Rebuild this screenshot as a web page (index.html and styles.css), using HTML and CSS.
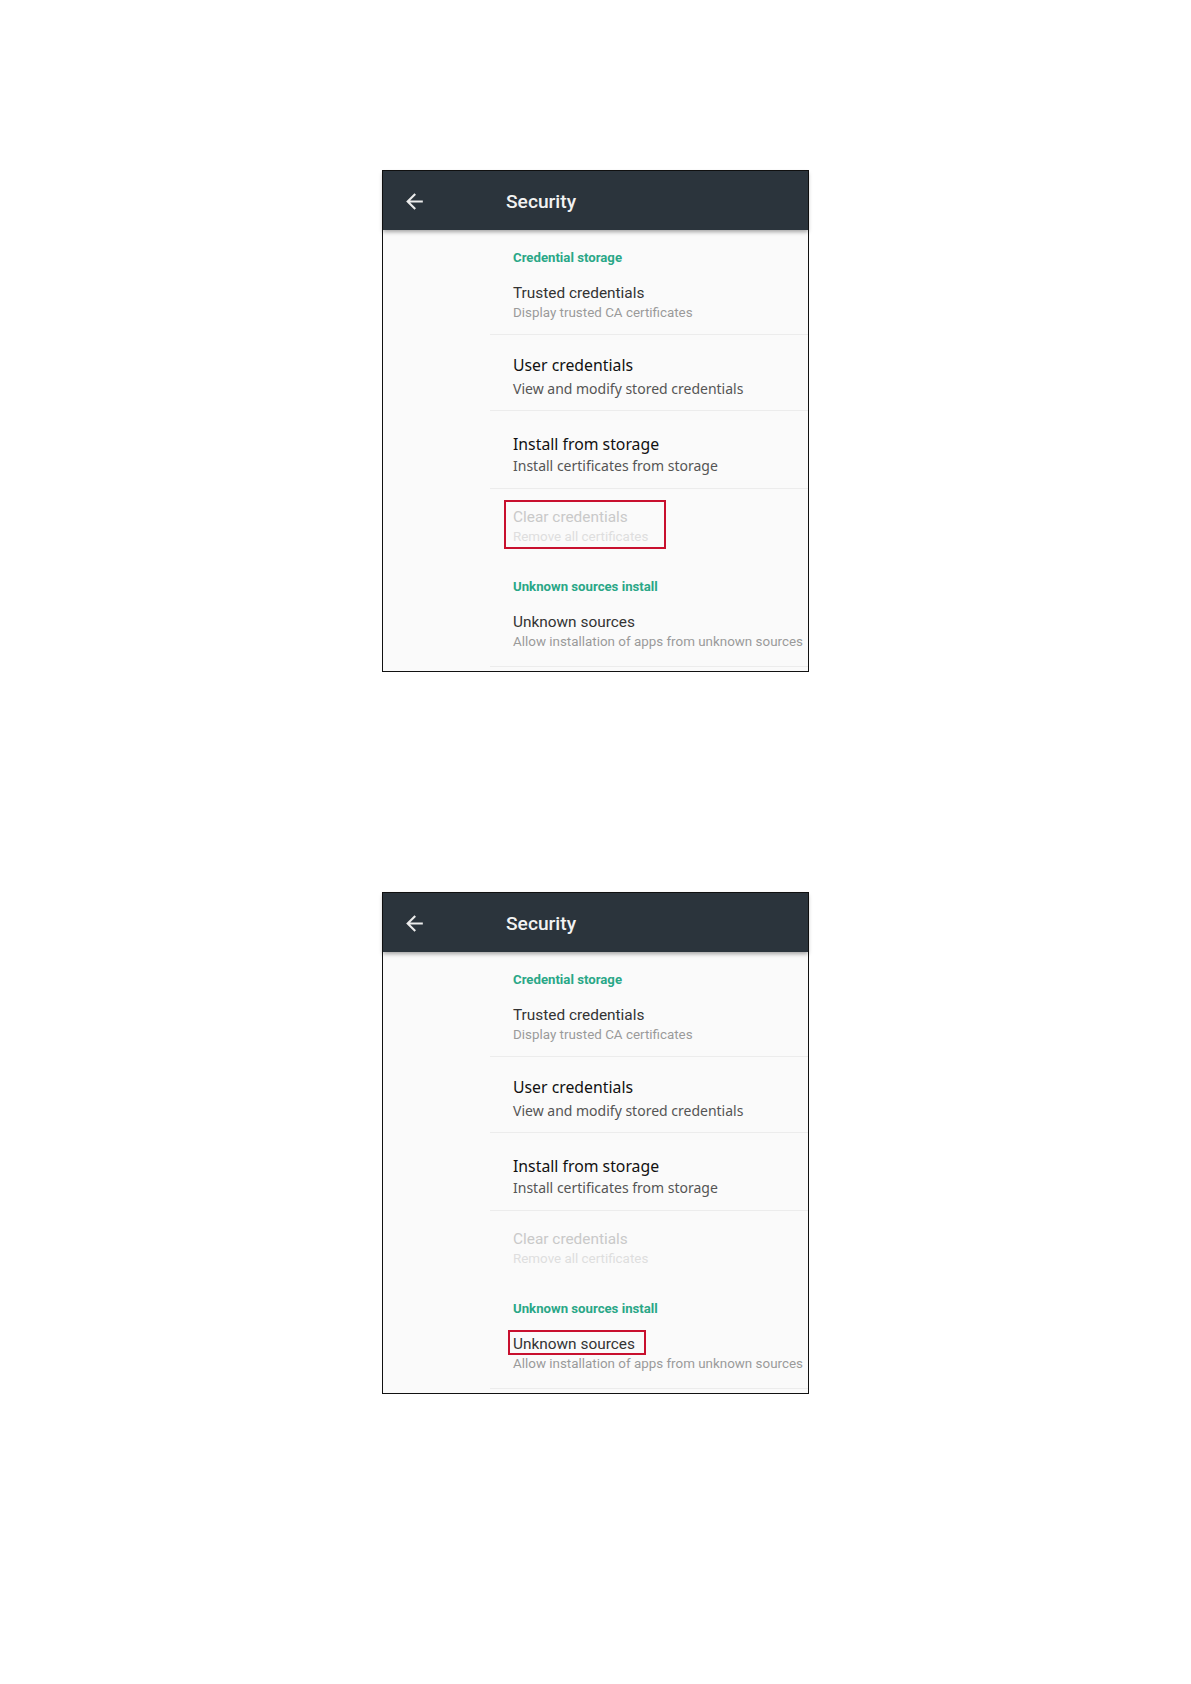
FILE: index.html
```html
<!DOCTYPE html>
<html lang="en">
<head>
<meta charset="utf-8">
<title>Security</title>
<link rel="stylesheet" href="styles.css">
</head>
<body>
<div class="page">
  <section class="panel">
    <header class="bar">
      <svg class="back" viewBox="0 0 24 24" width="25" height="25"><path d="M20 11H7.83l5.59-5.59L12 4l-8 8 8 8 1.41-1.41L7.83 13H20v-2z" fill="#ececec"/></svg>
      <span class="title">Security</span>
    </header>
    <div class="list">
      <div class="cat first">Credential storage</div>
      <div class="item trusted">
        <div class="t-roboto">Trusted credentials</div>
        <div class="s-roboto">Display trusted CA certificates</div>
      </div>
      <div class="item user">
        <div class="t-noto">User credentials</div>
        <div class="s-noto">View and modify stored credentials</div>
      </div>
      <div class="item install">
        <div class="t-noto">Install from storage</div>
        <div class="s-noto">Install certificates from storage</div>
      </div>
      <div class="item clear">
        <div class="clearbox mark">
          <div class="t-roboto dis">Clear credentials</div>
          <div class="s-roboto dis2 tight">Remove all certificates</div>
        </div>
      </div>
      <div class="cat second">Unknown sources install</div>
      <div class="item unknown">
        <div class="ubox"><span class="t-roboto">Unknown sources</span></div>
        <div class="s-roboto tight allow">Allow installation of apps from unknown sources</div>
      </div>
    </div>
  </section>

  <section class="panel">
    <header class="bar">
      <svg class="back" viewBox="0 0 24 24" width="25" height="25"><path d="M20 11H7.83l5.59-5.59L12 4l-8 8 8 8 1.41-1.41L7.83 13H20v-2z" fill="#ececec"/></svg>
      <span class="title">Security</span>
    </header>
    <div class="list">
      <div class="cat first">Credential storage</div>
      <div class="item trusted">
        <div class="t-roboto">Trusted credentials</div>
        <div class="s-roboto">Display trusted CA certificates</div>
      </div>
      <div class="item user">
        <div class="t-noto">User credentials</div>
        <div class="s-noto">View and modify stored credentials</div>
      </div>
      <div class="item install">
        <div class="t-noto">Install from storage</div>
        <div class="s-noto">Install certificates from storage</div>
      </div>
      <div class="item clear">
        <div class="clearbox">
          <div class="t-roboto dis">Clear credentials</div>
          <div class="s-roboto dis2 tight">Remove all certificates</div>
        </div>
      </div>
      <div class="cat second">Unknown sources install</div>
      <div class="item unknown">
        <div class="ubox mark"><span class="t-roboto">Unknown sources</span></div>
        <div class="s-roboto tight allow">Allow installation of apps from unknown sources</div>
      </div>
    </div>
  </section>
</div>
</body>
</html>
```
FILE: styles.css
```css
html, body {
  margin: 0;
  padding: 0;
  background: #ffffff;
}
.page {
  display: flex;
  flex-direction: column;
  align-items: center;
  gap: 220px;
  padding-top: 170px;
}
.panel {
  width: 427px;
  box-sizing: border-box;
  border: 1px solid #111;
  background: #fafafa;
  font-family: Roboto, "Liberation Sans", sans-serif;
}
.bar {
  position: relative;
  z-index: 1;
  height: 59px;
  background: #2b343c;
  display: flex;
  align-items: center;
  box-shadow: 0 2px 4px rgba(0,0,0,0.35);
}
.back {
  margin-left: 19px;
  margin-top: 1px;
  display: block;
}
.title {
  margin-left: 79px;
  margin-top: 2px;
  color: #f2f2f2;
  font-family: Roboto, sans-serif;
  font-weight: 500;
  font-size: 19.2px;
}
.list {
  padding-bottom: 4px;
}
.cat {
  margin-left: 130px;
  font-family: Roboto, sans-serif;
  font-weight: 700;
  font-size: 13.2px;
  line-height: 20px;
  color: #2aa787;
}
.cat.first { padding-top: 18px; }
.cat.second { padding-top: 28px; }
.item {
  margin-left: 107px;
  padding-left: 23px;
  border-bottom: 1px solid #ececec;
}
.item.trusted { padding-top: 15px; padding-bottom: 11px; }
.item.user { padding-top: 20px; padding-bottom: 11px; }
.item.install { padding-top: 23px; padding-bottom: 12px; }
.item.clear { padding-top: 11px; border-bottom: none; }
.item.unknown { padding-top: 11px; padding-bottom: 15px; }
.t-roboto {
  font-family: Roboto, sans-serif;
  font-size: 15.4px;
  line-height: 20px;
  color: #333;
}
.s-roboto {
  font-family: Roboto, sans-serif;
  font-size: 13.4px;
  line-height: 20px;
  color: #9a9a9a;
}
.tight { line-height: 19px; }
.t-noto {
  font-family: "Noto Sans", sans-serif;
  font-size: 15.8px;
  line-height: 20px;
  color: #111;
}
.s-noto {
  font-family: "Noto Sans", sans-serif;
  font-size: 14px;
  line-height: 20px;
  color: #555;
  margin-top: 2px;
}
.item.user .s-noto { margin-top: 4px; }
.dis { color: #c9c9c9; }
.dis2 { color: #dedede; }
.clearbox {
  width: 162px;
  box-sizing: border-box;
  margin-left: -9px;
  padding: 5px 0 1px 7px;
  border: 2px solid transparent;
}
.ubox {
  width: fit-content;
  margin-left: -5px;
  padding: 4px 9px 0 3px;
  border: 2px solid transparent;
}
.ubox .t-roboto {
  display: block;
  line-height: 17px;
}
.mark { border-color: #c8102e; }
.allow { margin-top: -1px; }
```
